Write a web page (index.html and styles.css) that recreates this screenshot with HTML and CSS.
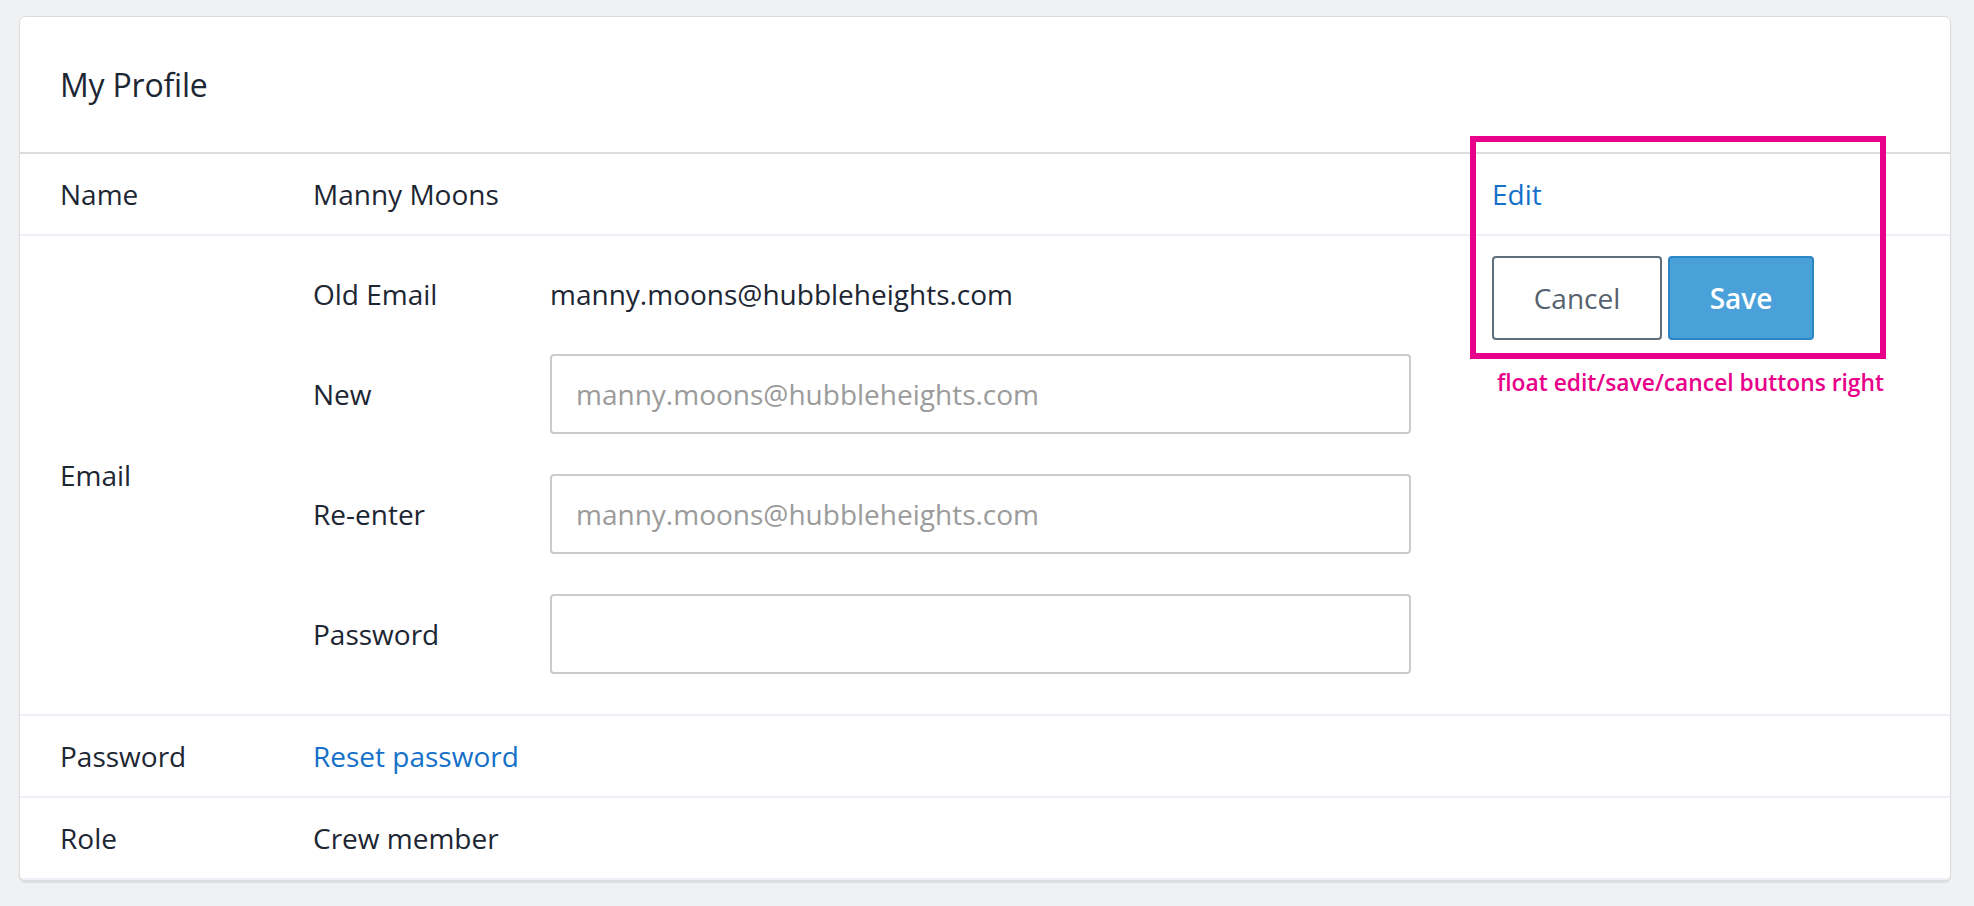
FILE: index.html
```html
<!DOCTYPE html>
<html lang="en">
<head>
<meta charset="utf-8">
<title>My Profile</title>
<link rel="stylesheet" href="styles.css">
</head>
<body>
  <div class="card">
    <div class="card-header"><h1 class="title">My Profile</h1></div>

    <div class="row row-simple">
      <div class="label">Name</div>
      <div class="value">Manny Moons</div>
      <div class="actions"><a class="link" href="#">Edit</a></div>
    </div>

    <div class="row row-email">
      <div class="label label-center">Email</div>
      <div class="email-fields">
        <div class="sub-label">Old Email</div>
        <div class="sub-value">manny.moons@hubbleheights.com</div>
        <div class="sub-label">New</div>
        <input class="field" type="text" placeholder="manny.moons@hubbleheights.com">
        <div class="sub-label">Re-enter</div>
        <input class="field" type="text" placeholder="manny.moons@hubbleheights.com">
        <div class="sub-label">Password</div>
        <input class="field" type="password">
      </div>
      <div class="actions actions-top">
        <button class="btn btn-cancel" type="button">Cancel</button>
        <button class="btn btn-save" type="button">Save</button>
      </div>
    </div>

    <div class="row row-simple">
      <div class="label">Password</div>
      <div class="value"><a class="link" href="#">Reset password</a></div>
      <div class="actions"></div>
    </div>

    <div class="row row-simple">
      <div class="label">Role</div>
      <div class="value">Crew member</div>
      <div class="actions"></div>
    </div>
  </div>

  <div class="annotation">
    <div class="annotation-box"></div>
    <div class="annotation-note">float edit/save/cancel buttons right</div>
  </div>
</body>
</html>
```

FILE: styles.css
```css
* { box-sizing: border-box; }

html, body {
  margin: 0;
  background: #f0f1f3;
  font-family: "Open Sans", "Noto Sans", "Liberation Sans", sans-serif;
  color: #1d2633;
}

body {
  padding: 16px 23px 0 19px;
  position: relative;
  min-height: 906px;
}

.card {
  background: #ffffff;
  border: 1px solid #dcdcdc;
  border-radius: 6px;
  box-shadow: 0 2px 1px rgba(0, 0, 0, 0.08);
  overflow: hidden;
}

.card-header {
  height: 137px;
  display: flex;
  align-items: center;
  padding: 0 40px;
  border-bottom: 2px solid #dcdcdc;
}

.title {
  margin: 0;
  font-size: 32px;
  font-weight: 400;
  color: #1d2633;
  letter-spacing: -0.2px;
}

.row {
  display: grid;
  grid-template-columns: 253px 1fr 418px;
  padding: 0 40px;
  border-bottom: 2px solid #efeff7;
  font-size: 28px;
}

.row-simple {
  height: 82px;
  align-items: center;
}

.label, .value, .sub-label, .sub-value {
  line-height: 40px;
}

.label-center { align-self: center; }

.link {
  color: #1570c9;
  text-decoration: none;
}

.email-fields {
  display: grid;
  grid-template-columns: 237px 861px;
  grid-template-rows: 40px 80px 80px 80px;
  row-gap: 40px;
  align-items: center;
  padding: 38px 0 40px;
}

.field {
  height: 80px;
  width: 861px;
  border: 2px solid #cbcbcb;
  border-radius: 4px;
  padding: 0 24px;
  font-family: inherit;
  font-size: 28px;
  color: #1d2633;
  background: #fff;
  outline: none;
}

.field::placeholder { color: #9b9b9b; }

.actions-top {
  align-self: start;
  display: flex;
  gap: 6px;
  padding-top: 20px;
}

.btn {
  height: 84px;
  border-radius: 4px;
  font-family: inherit;
  font-size: 28px;
  cursor: pointer;
}

.btn-cancel {
  width: 170px;
  background: #fff;
  border: 2px solid #5e6d7a;
  color: #56626e;
}

.btn-save {
  width: 146px;
  background: #4aa0d9;
  border: 2px solid #2c87c6;
  color: #ffffff;
  font-weight: 600;
}

.annotation {
  position: absolute;
  left: 1470px;
  top: 136px;
  width: 416px;
}

.annotation-box {
  height: 223px;
  border: 6px solid #e8008a;
}

.annotation-note {
  margin-top: 9px;
  text-align: right;
  padding-right: 2px;
  font-size: 22.8px;
  font-weight: 600;
  color: #e8008a;
  line-height: 30px;
  white-space: nowrap;
}
```
